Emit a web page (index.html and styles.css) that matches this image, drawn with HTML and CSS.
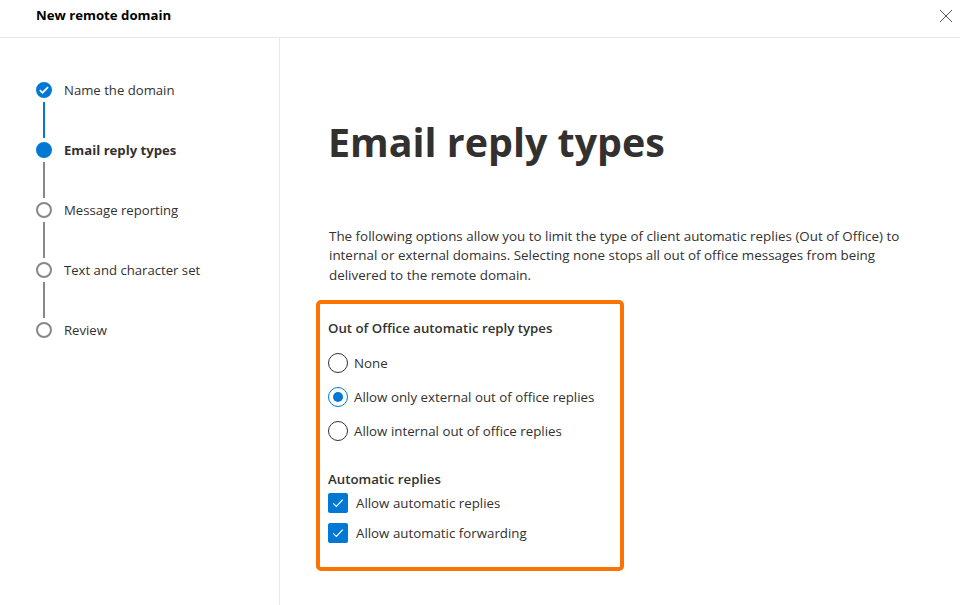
FILE: index.html
```html
<!DOCTYPE html>
<html lang="en">
<head>
<meta charset="utf-8">
<title>New remote domain</title>
<link rel="stylesheet" href="styles.css">
</head>
<body>
<div class="panel">
  <header class="header">
    <h1 class="header-title">New remote domain</h1>
    <button class="close" aria-label="Close">
      <svg width="14" height="14" viewBox="0 0 14 14"><path d="M1 1l12 12M13 1L1 13" stroke="#555" stroke-width="1" fill="none"/></svg>
    </button>
  </header>
  <div class="body">
    <nav class="steps">
      <div class="step">
        <div class="marker">
          <span class="dot dot-done"><svg width="12" height="12" viewBox="0 0 12 12"><path d="M1.8 6.2l2.7 2.5 5.6-5.6" stroke="#fff" stroke-width="1.7" fill="none"/></svg></span>
          <span class="line line-done"></span>
        </div>
        <span class="step-label">Name the domain</span>
      </div>
      <div class="step">
        <div class="marker">
          <span class="dot dot-current"></span>
          <span class="line"></span>
        </div>
        <span class="step-label step-label-current">Email reply types</span>
      </div>
      <div class="step">
        <div class="marker">
          <span class="dot"></span>
          <span class="line"></span>
        </div>
        <span class="step-label">Message reporting</span>
      </div>
      <div class="step">
        <div class="marker">
          <span class="dot"></span>
          <span class="line"></span>
        </div>
        <span class="step-label">Text and character set</span>
      </div>
      <div class="step">
        <div class="marker">
          <span class="dot"></span>
        </div>
        <span class="step-label">Review</span>
      </div>
    </nav>
    <main class="content">
      <h2 class="title">Email reply types</h2>
      <p class="intro">The following options allow you to limit the type of client automatic replies (Out of Office) to internal or external domains. Selecting none stops all out of office messages from being delivered to the remote domain.</p>
      <section class="options">
        <h3 class="group-title">Out of Office automatic reply types</h3>
        <div class="radios">
          <div class="radio-row"><span class="radio"></span><span class="option-text">None</span></div>
          <div class="radio-row"><span class="radio radio-on"><span class="radio-fill"></span></span><span class="option-text">Allow only external out of office replies</span></div>
          <div class="radio-row"><span class="radio"></span><span class="option-text">Allow internal out of office replies</span></div>
        </div>
        <h3 class="group-title group-title-second">Automatic replies</h3>
        <div class="checks">
          <div class="check-row"><span class="check"><svg width="14" height="14" viewBox="0 0 14 14"><path d="M2.2 7.4l3.2 3.1 6.4-6.8" stroke="#fff" stroke-width="1.2" fill="none"/></svg></span><span class="option-text">Allow automatic replies</span></div>
          <div class="check-row"><span class="check"><svg width="14" height="14" viewBox="0 0 14 14"><path d="M2.2 7.4l3.2 3.1 6.4-6.8" stroke="#fff" stroke-width="1.2" fill="none"/></svg></span><span class="option-text">Allow automatic forwarding</span></div>
        </div>
      </section>
    </main>
  </div>
</div>
</body>
</html>
```
FILE: styles.css
```css
* { box-sizing: border-box; }
html, body { margin: 0; height: 100%; overflow: hidden; background: #fff; }
body { font-family: "Open Sans", "Noto Sans", sans-serif; font-size: 13px; color: #323130; }
.panel { display: flex; flex-direction: column; height: 605px; }
.header { flex: none; height: 38px; border-bottom: 1px solid #e8e8e8; display: flex; align-items: flex-start; justify-content: space-between; padding: 6px 7px 0 36px; }
.header-title { margin: 0; font-size: 13.2px; line-height: 18px; font-weight: 700; color: #000; }
.close { border: 0; background: none; padding: 2px 0 0; width: 14px; height: 18px; display: block; }
.close svg { display: block; }
.body { flex: 1; display: flex; min-height: 0; }
.steps { flex: none; width: 280px; border-right: 1px solid #e8e8e8; padding: 44px 0 0 36px; }
.step { display: flex; gap: 12px; height: 60px; }
.marker { width: 16px; display: flex; flex-direction: column; align-items: center; flex: none; }
.dot { width: 16px; height: 16px; border-radius: 50%; border: 2px solid #8a8886; background: #fff; display: flex; align-items: center; justify-content: center; flex: none; }
.dot-done, .dot-current { background: #0078d4; border-color: #0078d4; }
.line { width: 2px; height: 36px; margin-top: 4px; background: #8a8886; }
.line-done { background: #0078d4; }
.step-label { font-size: 13.15px; line-height: 18px; margin-top: -1px; }
.step-label-current { font-weight: 700; }
.content { flex: 1; padding: 0 48px 0 48px; min-width: 0; }
.title { margin: 77px 0 0; font-size: 39.4px; line-height: 54px; font-weight: 700; color: #323130; }
.intro { margin: 57.5px 0 0; padding-left: 1px; font-size: 13.4px; line-height: 19.5px; width: 581px; }
.options { width: 308px; height: 271px; margin: 15px 0 0 -12px; border: 4px solid #fb7300; border-radius: 5px; padding: 14px 0 0 8px; }
.group-title { margin: 0; font-size: 13.25px; line-height: 20px; font-weight: 600; color: #323130; }
.radios { margin-top: 15px; display: flex; flex-direction: column; gap: 14px; }
.radio-row { display: flex; align-items: center; gap: 6px; height: 20px; }
.radio { width: 20px; height: 20px; border-radius: 50%; border: 1px solid #323130; background: #fff; display: flex; align-items: center; justify-content: center; flex: none; }
.radio-on { border-color: #0078d4; }
.radio-fill { width: 10px; height: 10px; border-radius: 50%; background: #0078d4; }
.group-title-second { margin-top: 28px; }
.checks { margin-top: 4px; display: flex; flex-direction: column; gap: 10px; }
.check-row { display: flex; align-items: center; gap: 8px; height: 20px; }
.check { width: 20px; height: 20px; border-radius: 2px; background: #0078d4; display: flex; align-items: center; justify-content: center; flex: none; }
.check svg { display: block; }
.option-text { font-size: 13.3px; line-height: 20px; }
```
